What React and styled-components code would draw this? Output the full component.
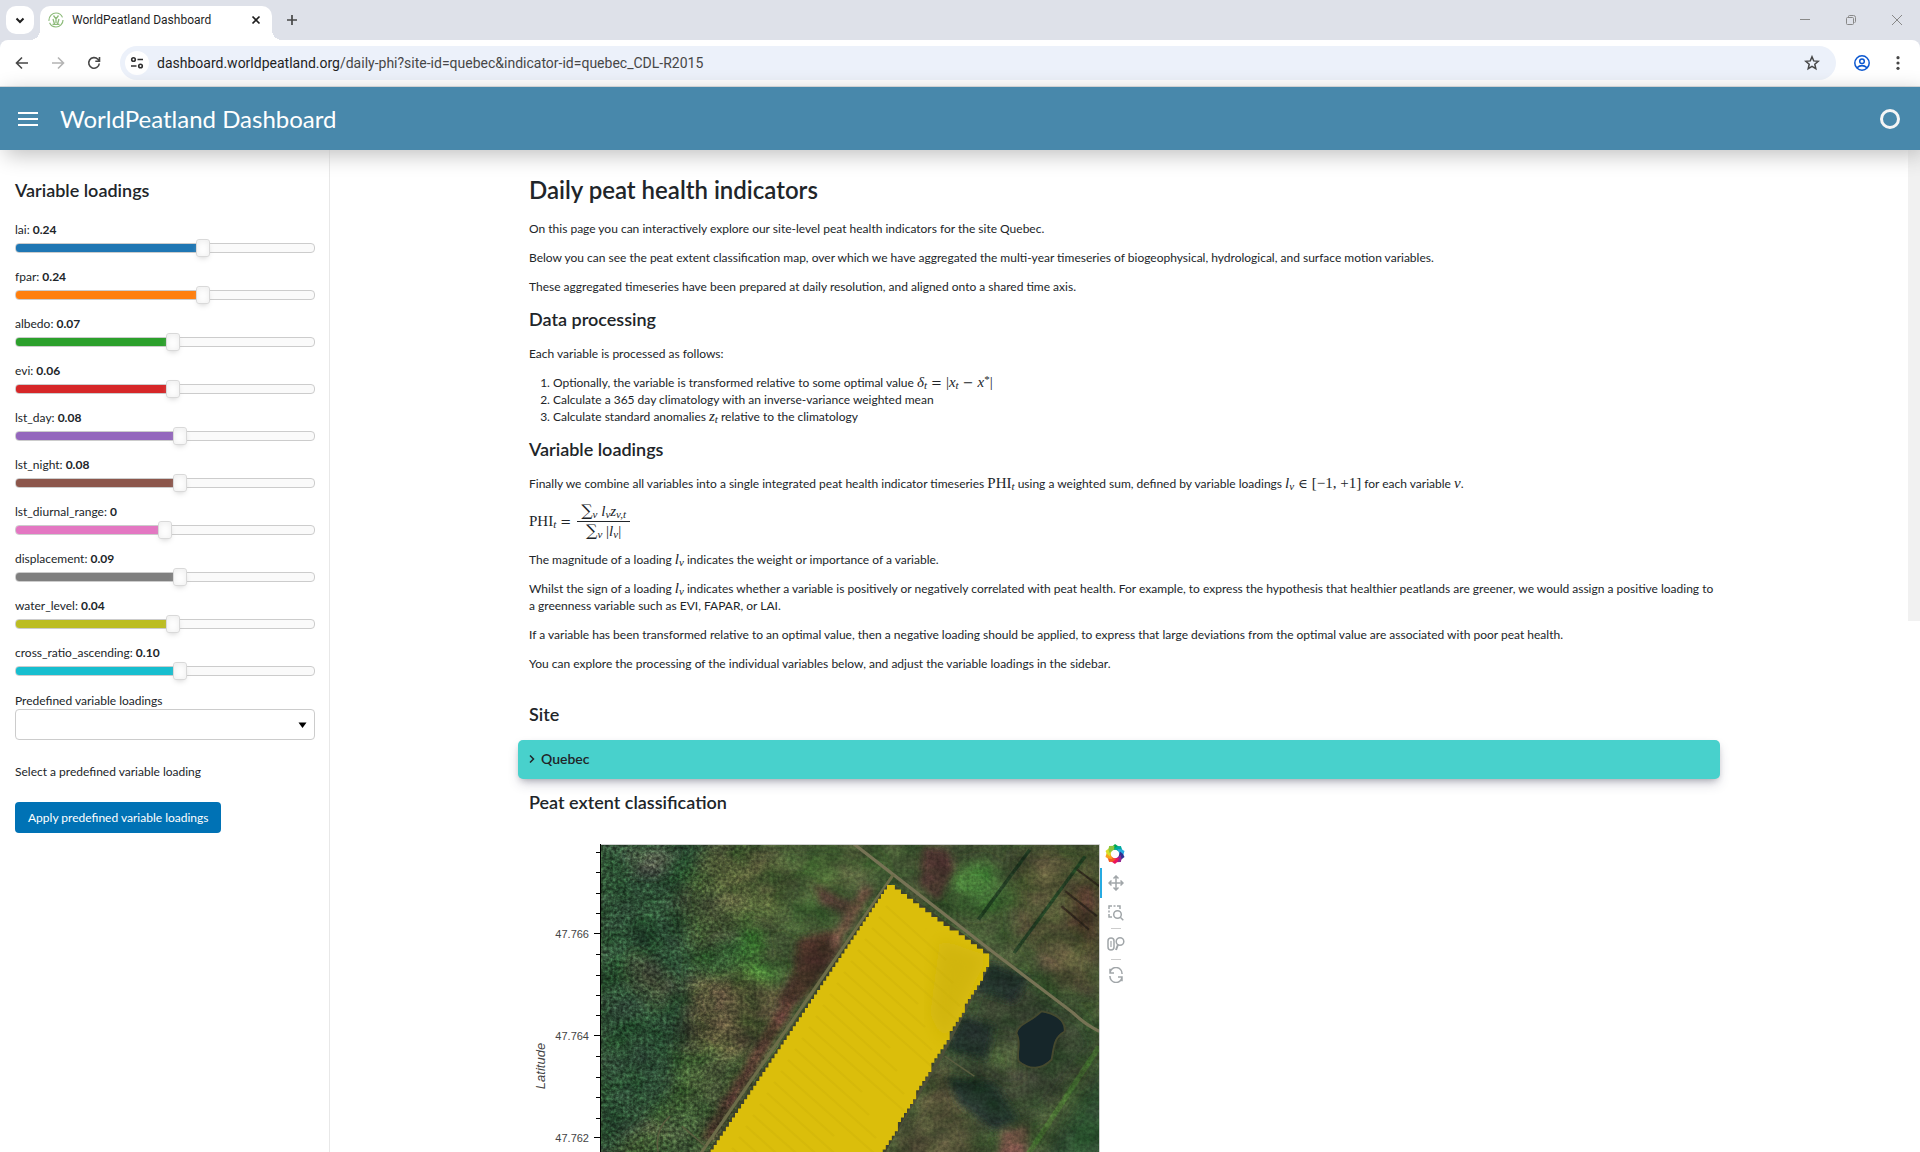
import React, { useState } from "react";
import styled, { createGlobalStyle } from "styled-components";

const GlobalStyle = createGlobalStyle`
  * { box-sizing: border-box; }
  html, body, #root { height: 100%; }
  body {
    margin: 0;
    overflow: hidden;
    background: #ffffff;
    color: #212529;
    font: 12px/17px Lato, "Liberation Sans", sans-serif;
  }
  button, select, input { font: inherit; color: inherit; }
`;

const Page = styled.div`
  display: flex;
  flex-direction: column;
  height: 100%;
`;

/* ---------- browser window ---------- */

const TabStrip = styled.div`
  display: flex;
  align-items: flex-end;
  height: 40px;
  flex: none;
  background: #dee1e9;
`;

const IconButton = styled.button`
  display: flex;
  align-items: center;
  justify-content: center;
  width: ${(p) => p.$w || 28}px;
  height: ${(p) => p.$h || 28}px;
  padding: 0;
  border: 0;
  border-radius: ${(p) => p.$radius || 0}px;
  background: ${(p) => p.$bg || "transparent"};
  flex: none;
`;

const TabSearch = styled.div`
  display: flex;
  padding: 0 6px;
  height: 34px;
`;

const Tab = styled.div`
  position: relative;
  display: flex;
  align-items: center;
  gap: 8px;
  width: 232px;
  height: 34px;
  padding: 0 8px;
  padding-bottom: 6px;
  border-radius: 10px 10px 0 0;
  background: #ffffff;
  color: #1f1f1f;
  font: 12px/16px Roboto, "Noto Sans", sans-serif;
  &::before, &::after {
    content: "";
    position: absolute;
    bottom: 0;
    width: 10px;
    height: 10px;
  }
  &::before {
    left: -10px;
    background: radial-gradient(circle at 0 0, transparent 10px, #ffffff 10px);
  }
  &::after {
    right: -10px;
    background: radial-gradient(circle at 100% 0, transparent 10px, #ffffff 10px);
  }
`;

const TabTitle = styled.span`
  flex: 1;
  white-space: nowrap;
`;

const NewTab = styled.div`
  display: flex;
  padding-left: 6px;
  height: 34px;
`;

const WindowButtons = styled.div`
  display: flex;
  margin-left: auto;
  height: 40px;
`;

const ToolbarBack = styled.div`
  flex: none;
  background: #dee1e9;
`;

const Toolbar = styled.div`
  display: flex;
  align-items: center;
  height: 47px;
  padding: 0 4px 1px 4px;
  border-bottom: 1px solid #d5d9dc;
  border-radius: 8px 8px 0 0;
  background: #ffffff;
`;

const AddressBar = styled.div`
  display: flex;
  align-items: center;
  flex: 1;
  height: 34px;
  margin: 0 8px;
  padding: 0 10px 0 5px;
  border-radius: 17px;
  background: #ecf1fa;
`;

const Address = styled.div`
  flex: 1;
  padding-left: 8px;
  color: #474747;
  font: 14px/20px Roboto, "Noto Sans", sans-serif;
  white-space: nowrap;
  b { font-weight: 400; color: #1f1f1f; }
`;

/* ---------- dashboard frame ---------- */

const Header = styled.header`
  position: relative;
  z-index: 2;
  display: flex;
  align-items: center;
  flex: none;
  height: 63px;
  padding: 0 20px 0 14px;
  background: #4888ab;
  box-shadow: 5px 5px 20px silver;
  color: #ffffff;
`;

const Brand = styled.a`
  margin-left: 18px;
  color: inherit;
  font-size: 24px;
  line-height: 34px;
  text-decoration: none;
`;

const Busy = styled.div`
  width: 20px;
  height: 20px;
  margin-left: auto;
  border: 3px solid #f5f5f5;
  border-radius: 50%;
`;

const Body = styled.div`
  display: flex;
  flex: 1;
  min-height: 0;
`;

const Sidebar = styled.aside`
  flex: none;
  width: 330px;
  padding: 28px 14px 0 15px;
  border-right: 1px solid #e8e8e8;
`;

const Main = styled.main`
  flex: 1;
  min-width: 0;
  overflow: hidden;
`;

const ScrollTrack = styled.div`
  flex: none;
  width: 12px;
`;

const ScrollThumb = styled.div`
  height: 47%;
  background: #f1f1f1;
`;

/* ---------- sidebar widgets ---------- */

const Heading = styled.h2`
  margin: 0;
  padding-bottom: 2px;
  font-size: 18px;
  line-height: 24px;
  font-weight: 600;
`;

const SliderList = styled.div`
  display: flex;
  flex-direction: column;
  gap: 11px;
  padding: 17px 0 12px;
`;

const SliderField = styled.div`
  label { display: block; line-height: 18px; }
  b { font-weight: 700; }
`;

const SliderBox = styled.div`
  display: grid;
  align-items: center;
  height: 18px;
  > * { grid-area: 1 / 1; }
`;

const Track = styled.div`
  height: 10px;
  border: 1px solid #cccccc;
  border-radius: 4px;
  background: #fafafa;
  overflow: hidden;
`;

const Fill = styled.div`
  height: 8px;
  background: ${(p) => p.$color};
`;

const Range = styled.input`
  appearance: none;
  width: calc(100% + 14px);
  height: 18px;
  margin: 0 -7px;
  background: transparent;
  &::-webkit-slider-thumb {
    appearance: none;
    width: 14px;
    height: 18px;
    border: 1px solid #d9d9d9;
    border-radius: 3px;
    background: #ffffff;
    box-shadow: inset 0 0 1px #ffffff, inset 0 1px 7px #ebebeb, 0 3px 6px -3px #bbbbbb;
  }
`;

const SelectBox = styled.div`
  display: grid;
  align-items: center;
  > * { grid-area: 1 / 1; }
  > svg { justify-self: end; margin-right: 8px; pointer-events: none; }
`;

const Select = styled.select`
  appearance: none;
  width: 100%;
  height: 31px;
  padding: 0 12px;
  border: 1px solid #cccccc;
  border-radius: 4px;
  background: #ffffff;
`;

const Hint = styled.p`
  margin: 23px 0 22px;
`;

const ApplyButton = styled.button`
  height: 31px;
  padding: 0 13px;
  border: 0;
  border-radius: 4px;
  background: #0072b5;
  color: #ffffff;
`;

/* ---------- main column ---------- */

const Column = styled.div`
  width: 100%;
  max-width: 1202px;
  margin: 0 auto;
  padding-top: 23px;
`;

const Prose = styled.div`
  display: flex;
  flex-direction: column;
  gap: 12px;
  padding: 0 0 0 11px;
  p { margin: 0; }
  ol { margin: 0; padding-left: 24px; }
`;

const Title = styled.h1`
  margin: 0;
  padding-bottom: 2px;
  font-size: 24px;
  line-height: 33px;
  font-weight: 600;
`;

const SiteBlock = styled.section`
  margin-top: 30px;
`;

const Card = styled.details`
  margin: 12px 0 11px;
  border-radius: 5px;
  background: #48d1cc;
  box-shadow: rgba(50, 50, 93, 0.25) 0 6px 12px -2px, rgba(0, 0, 0, 0.3) 0 3px 7px -3px;
  summary {
    display: flex;
    align-items: center;
    gap: 6px;
    height: 39px;
    padding: 0 11px 1px;
    font-size: 14px;
    line-height: 20px;
    font-weight: 600;
    list-style: none;
  }
`;

const Figure = styled.figure`
  display: flex;
  margin: 16px 0 0;
`;

const Tools = styled.div`
  display: flex;
  flex-direction: column;
  align-items: center;
  width: 31px;
`;

const BokehLink = styled.a`
  display: flex;
  padding-right: 2px;
  height: 24px;
`;

const ToolButton = styled.button`
  display: flex;
  align-items: center;
  justify-content: center;
  width: 31px;
  height: 30px;
  padding: 0 2px 0 0;
  border: 0;
  border-left: 2px solid ${(p) => (p.$active ? "#26aae1" : "transparent")};
  background: transparent;
`;

const Divider = styled.span`
  width: 10px;
  height: 1px;
  background: #cccccc;
`;

/* ---------- math ---------- */

const Formula = styled.span`
  font-family: "Liberation Serif", "DejaVu Serif", serif;
  font-size: 15px;
  line-height: 16px;
  white-space: nowrap;
  i { font-style: italic; }
  sub { font-size: 11px; line-height: 0; vertical-align: -2px; font-style: italic; }
  sup { font-size: 11px; line-height: 0; vertical-align: 4px; }
`;

const Rel = styled.span`
  padding: 0 4px;
  font-family: "DejaVu Serif", serif;
  font-size: 13px;
`;

const Equation = styled(Formula)`
  display: flex;
  align-items: center;
  height: 35px;
`;

const Fraction = styled.span`
  display: flex;
  flex-direction: column;
  margin-left: 2px;
  > span { text-align: center; line-height: 17px; padding: 0 4px; }
  > span:first-child { padding-bottom: 1px; }
  > span + span { padding-top: 1px; border-top: 1px solid #212529; }
`;

const Sum = styled.span`
  font-family: "DejaVu Serif", serif;
  font-size: 16px;
  line-height: 0;
`;

/* ---------- icons ---------- */

const Svg = ({ w = 20, h, box, children, ...rest }) => (
  <svg width={w} height={h || w} viewBox={box || `0 0 ${w} ${h || w}`} fill="none" aria-hidden="true" {...rest}>
    {children}
  </svg>
);

const Favicon = () => (
  <Svg w={16}>
    <circle cx="8" cy="8" r="7" stroke="#8dbb7a" strokeWidth="1.2" strokeDasharray="19 2 20 3" />
    <path d="M5.5 3.5 8 7l2.5-3.5M8 5v6M5 7l1.5 5M11 7l-1.5 5M4.5 12.3h7" stroke="#8dbb7a" strokeWidth="1.3" />
  </Svg>
);

const BOKEH = ["#00a651", "#00a99d", "#26aae1", "#2e3192", "#92278f", "#ed145b", "#f15a24", "#f9a01b", "#d7df23", "#8dc63f"];

const BokehLogo = () => (
  <Svg w={20} box="-10 -10 20 20">
    {BOKEH.map((c, i) => (
      <path key={c} d="M-4 -4 L-2.6 -7.6 L0 -10 L4.4 -7 L2 -4.2 Z" fill={c} transform={`rotate(${i * 36})`} />
    ))}
  </Svg>
);

/* ---------- aerial map ---------- */

const STEP_Y = 4.56;
const STEP_X = 3.04;

function fieldOutline() {
  const left = [];
  const right = [];
  const snap = (x) => Math.round(x / STEP_X) * STEP_X;
  for (let y = 41; y < 320; y += STEP_Y) {
    const k = (y - 41) / STEP_Y;
    const xl = 287 - k * STEP_X;
    const xr = y < 110 ? 296 + k * 6.12 : y < 123 ? 388 : 388 - (y - 121) * 0.565;
    left.push(`${xl} ${y}`, `${xl} ${y + STEP_Y}`);
    right.unshift(`${snap(xr)} ${y + STEP_Y}`, `${snap(xr)} ${y}`);
  }
  return `M${left.join(" L")} L${right.join(" L")} Z`;
}

const OUTLINE = fieldOutline();
const MAJOR = [[90, "47.766"], [192, "47.764"], [294, "47.762"]];
const MINOR = [8, 28, 49, 69, 110, 131, 151, 171, 212, 233, 253, 274];

const Texture = styled.rect`
  mix-blend-mode: overlay;
`;

const Aerial = () => (
  <g clipPath="url(#frame)">
    <rect width="499" height="320" fill="#3f5231" />
    <g transform="scale(0.3954 0.3333) translate(-203 -43)">
      <g filter="url(#soft)">
        <path d="M180 20H480L400 200 440 380 420 600 380 800 180 1030Z" fill="#2a4a33" />
        <path d="M440 380 560 300 640 460 500 560Z" fill="#355531" />
        <path d="M470 80 620 50 700 120 640 280 520 260Z" fill="#4f5a34" />
        <path d="M600 40 850 40 920 130 800 200 700 150Z" fill="#486034" />
        <path d="M430 460 600 420 680 500 560 690 440 640Z" fill="#524f35" />
        <path d="M400 640 540 680 470 800 400 760Z" fill="#405431" />
        <path d="M280 60 400 60 360 130 290 130Z" fill="#455040" />
        <path d="M290 360 400 470 350 540 270 440Z" fill="#3f4836" />
        <path d="M540 370 660 420 640 470 560 430ZM560 280 600 300 620 380 580 370Z" fill="#3f7a32" />
        <path d="M700 210 780 230 790 300 690 290Z" fill="#3f6230" />
        <path d="M1060 130 1180 90 1240 190 1150 260Z" fill="#437035" />
        <path d="M1260 60 1466 50 1466 300 1380 420 1250 300Z" fill="#4e5033" />
        <path d="M1390 200 1466 120 1466 400 1400 300Z" fill="#4d3b2c" />
        <path d="M1290 330 1440 350 1466 500 1340 440Z" fill="#524f34" />
        <path d="M1180 390 1420 560 1466 640 1330 850 1180 900 1080 700Z" fill="#34422f" />
        <path d="M1200 620 1260 640 1260 760 1180 720Z" fill="#455534" />
        <path d="M1060 700 1100 760 1180 1030 900 1030Z" fill="#505036" />
        <path d="M1490 680 1490 1030 1300 1030Z" fill="#2b4a2f" />
        <path d="M350 860 480 800 440 1030 340 1030Z" fill="#3b5533" />
      </g>
      <g filter="url(#mid)">
        <path d="M745 160 790 190 860 230 830 260 760 220ZM1020 50 1080 60 1100 120 1060 220 1010 160Z" fill="#4a352d" />
        <path d="M700 330 790 300 820 340 740 480 680 540 650 520 690 430Z" fill="#453028" />
        <path d="M870 170 895 180 800 360 780 340Z" fill="#66483c" />
        <path d="M650 540 700 520 490 930 455 930Z" fill="#52392e" />
        <path d="M1190 400 1290 440 1250 520 1150 480ZM1120 560 1200 590 1180 690 1080 660ZM1080 740 1200 760 1260 870 1200 900 1110 820Z" fill="#20302b" />
        <path d="M1220 910 1290 880 1270 1030 1200 1030Z" fill="#674b3f" />
      </g>
      <path d="M1290 60 1160 270M1430 80 1250 370" stroke="#223c24" strokeWidth="9" filter="url(#edge)" />
      <path d="M1466 650 1270 1002" stroke="#41652f" strokeWidth="14" filter="url(#edge)" />
      <path d="M1410 120 1466 170M1380 185 1460 260M1370 230 1440 300" stroke="#2f271c" strokeWidth="6" filter="url(#edge)" />
    </g>
    <Texture width="499" height="320" filter="url(#patches)" opacity="0.4" />
    <Texture width="499" height="320" filter="url(#trees)" opacity="0.18" />
    <Texture width="260" height="320" filter="url(#trees)" mask="url(#forest)" />
    <g transform="scale(0.3954 0.3333) translate(-203 -43)">
      <g filter="url(#edge)">
        <path d="M845 43 945 135 1200 370 1400 550Q1430 585 1466 605" stroke="#777355" strokeWidth="9" />
        <path d="M945 135 440 1002" stroke="#6d6d49" strokeWidth="8" />
        <path d="M1183 410 1066 680 902 1002" stroke="#4d4f37" strokeWidth="8" />
        <path d="M1075 680 1150 740M350 966Q340 900 380 860M410 890 470 950" stroke="#5b5d40" strokeWidth="4" />
        <path d="M1320 545C1350 550 1382 570 1378 605C1350 625 1352 650 1345 690C1320 720 1290 722 1262 695C1255 670 1270 640 1256 610C1262 580 1290 580 1320 545Z" fill="#14252a" stroke="#45482f" strokeWidth="5" />
      </g>
      <path d="M935 170 486 966H476L927 170ZM950 170 1190 370 1184 376 940 186ZM1186 400 926 966H918L1180 400Z" fill="#3d412d" />
    </g>
    <path d={OUTLINE} fill="#dbbe0b" />
    <g clipPath="url(#field)">
      <path d="M340 95 388 112 345 200 330 170Z" fill="#d1b50a" filter="url(#haze)" />
      <g filter="url(#edge)" stroke="#c9ae09" strokeWidth="2" opacity="0.3">
        {Array.from({ length: 26 }, (_, i) => (
          <path key={i} d={`M${286 - i * 7} ${62 + i * 11} l${60 + (i % 4) * 14} ${54 + (i % 4) * 12}`} />
        ))}
      </g>
    </g>
  </g>
);

const MapPlot = () => (
  <svg width="571" height="320" viewBox="-71 0 571 320" fill="none" role="img" aria-label="Peat extent map">
    <defs>
      <clipPath id="frame"><rect width="499" height="320" /></clipPath>
      <clipPath id="field"><path d={OUTLINE} /></clipPath>
      <linearGradient id="fade">
        <stop offset="0" stopColor="#ffffff" stopOpacity="0.35" />
        <stop offset="0.4" stopColor="#ffffff" stopOpacity="0.25" />
        <stop offset="0.8" stopColor="#ffffff" stopOpacity="0" />
      </linearGradient>
      <mask id="forest"><rect width="260" height="320" fill="url(#fade)" /></mask>
      <filter id="soft"><feGaussianBlur stdDeviation="20" /></filter>
      <filter id="mid"><feGaussianBlur stdDeviation="9" /></filter>
      <filter id="haze"><feGaussianBlur stdDeviation="8" /></filter>
      <filter id="edge"><feGaussianBlur stdDeviation="0.7" /></filter>
      <filter id="patches" x="0" y="0" width="100%" height="100%" colorInterpolationFilters="sRGB">
        <feTurbulence type="fractalNoise" baseFrequency="0.03 0.04" numOctaves="5" seed="8" />
        <feColorMatrix values="1.3 0 0 0 -0.12  0.8 0.5 0 0 -0.12  1.1 0 0.1 0 -0.1  0 0 0 0 1" />
      </filter>
      <filter id="trees" x="0" y="0" width="100%" height="100%" colorInterpolationFilters="sRGB">
        <feTurbulence type="fractalNoise" baseFrequency="0.3" numOctaves="3" seed="3" />
        <feColorMatrix values="0 1.6 0 0 -0.32  0 1.6 0 0 -0.3  0 1.6 0 0 -0.3  0 0 0 0 1" />
      </filter>
    </defs>
    <Aerial />
    <path d="M0 0.5H499.5V320" stroke="#cfcfcf" />
    <path d="M0.5 0V320" stroke="#000000" />
    {MINOR.map((y) => <path key={y} d={`M-4 ${y + 0.5}H0`} stroke="#000000" />)}
    {MAJOR.map(([y, label]) => (
      <g key={y}>
        <path d={`M-6 ${y - 0.5}H0`} stroke="#000000" />
        <text x="-11" y={y + 4} textAnchor="end" fill="#444444" fontSize="11" fontFamily="Liberation Sans, Arial, sans-serif">{label}</text>
      </g>
    ))}
    <text transform="translate(-55 222) rotate(-90)" textAnchor="middle" fill="#444444" fontSize="13" fontStyle="italic" fontFamily="Liberation Sans, Arial, sans-serif">Latitude</text>
  </svg>
);

/* ---------- page ---------- */

const LOADINGS = [
  ["lai", "0.24", "#1f77b4"],
  ["fpar", "0.24", "#ff7f0e"],
  ["albedo", "0.07", "#2ca02c"],
  ["evi", "0.06", "#d62728"],
  ["lst_day", "0.08", "#9467bd"],
  ["lst_night", "0.08", "#8c564b"],
  ["lst_diurnal_range", "0", "#e377c2"],
  ["displacement", "0.09", "#7f7f7f"],
  ["water_level", "0.04", "#bcbd22"],
  ["cross_ratio_ascending", "0.10", "#17becf"],
];

function Slider({ name, initial, color }) {
  const [shown, setShown] = useState(initial);
  const stepped = Math.round(Number(shown) * 20) / 20;
  return (
    <SliderField>
      <label htmlFor={name}>{name}: <b>{shown}</b></label>
      <SliderBox>
        <Track><Fill $color={color} style={{ width: `${(stepped + 1) * 50}%` }} /></Track>
        <Range id={name} type="range" min="-1" max="1" step="0.05" value={stepped} onChange={(e) => setShown(e.target.value)} />
      </SliderBox>
    </SliderField>
  );
}

const grey = { stroke: "#a1a6a9", strokeWidth: 1.5 };

export default function App() {
  return (
    <Page>
      <GlobalStyle />
      <TabStrip>
        <TabSearch>
          <IconButton $radius={10} $bg="#ffffff" aria-label="Search tabs">
            <Svg w={10}><path d="M1.5 3.5 5 7l3.5-3.5" stroke="#1f1f1f" strokeWidth="2" /></Svg>
          </IconButton>
        </TabSearch>
        <Tab>
          <Favicon />
          <TabTitle>WorldPeatland Dashboard</TabTitle>
          <IconButton $w={16} $h={16} aria-label="Close tab">
            <Svg w={10}><path d="M1.5 1.5l7 7M8.5 1.5l-7 7" stroke="#1f1f1f" strokeWidth="1.7" /></Svg>
          </IconButton>
        </Tab>
        <NewTab>
          <IconButton aria-label="New tab">
            <Svg w={12}><path d="M6 1v10M1 6h10" stroke="#474747" strokeWidth="1.7" /></Svg>
          </IconButton>
        </NewTab>
        <WindowButtons>
          <IconButton $w={46} $h={40} aria-label="Minimize">
            <Svg w={10}><path d="M0 4.5h10" stroke="#888888" /></Svg>
          </IconButton>
          <IconButton $w={46} $h={40} aria-label="Restore">
            <Svg w={10}><rect x="0.5" y="2.5" width="7" height="7" rx="1" stroke="#888888" /><path d="M2.5 2V1.5q0-1 1-1h4q2 0 2 2v4q0 1-1 1" stroke="#888888" /></Svg>
          </IconButton>
          <IconButton $w={46} $h={40} aria-label="Close window">
            <Svg w={10}><path d="M0 0l10 10M10 0L0 10" stroke="#888888" /></Svg>
          </IconButton>
        </WindowButtons>
      </TabStrip>
      <ToolbarBack>
        <Toolbar>
          <IconButton $w={36} aria-label="Back">
            <Svg w={14}><path d="M13 7H2M7 1.5L1.5 7 7 12.5" stroke="#474747" strokeWidth="1.6" /></Svg>
          </IconButton>
          <IconButton $w={36} aria-label="Forward">
            <Svg w={14}><path d="M1 7h11M7 1.5L12.5 7 7 12.5" stroke="#b4b4b4" strokeWidth="1.6" /></Svg>
          </IconButton>
          <IconButton $w={36} aria-label="Reload">
            <Svg w={14}><path d="M12.3 7.5a5.3 5.3 0 1 1-1.4-4.2L12.5 5M12.5 1v4.2H8.3" stroke="#474747" strokeWidth="1.6" /></Svg>
          </IconButton>
          <AddressBar>
            <IconButton $w={24} $h={24} $radius={12} $bg="#ffffff" aria-label="Site information">
              <Svg w={14}>
                <circle cx="3.5" cy="3.5" r="1.8" stroke="#303030" strokeWidth="1.6" />
                <circle cx="10.5" cy="10" r="1.8" stroke="#303030" strokeWidth="1.6" />
                <path d="M7.5 3.5H13M1 10h5.5" stroke="#303030" strokeWidth="1.6" />
              </Svg>
            </IconButton>
            <Address><b>dashboard.worldpeatland.org</b>/daily-phi?site-id=quebec&amp;indicator-id=quebec_CDL-R2015</Address>
            <IconButton aria-label="Bookmark">
              <Svg w={16}><path d="M8 1.8l1.7 4.1 4.5.4-3.4 2.9 1 4.4L8 11.3l-3.8 2.3 1-4.4-3.4-2.9 4.5-.4z" stroke="#474747" strokeWidth="1.5" /></Svg>
            </IconButton>
          </AddressBar>
          <IconButton $w={36} aria-label="Profile">
            <Svg w={18}>
              <circle cx="9" cy="9" r="7.2" stroke="#0b57d0" strokeWidth="1.5" />
              <circle cx="9" cy="7.3" r="2.3" stroke="#0b57d0" strokeWidth="1.5" />
              <path d="M3.8 13.8Q9 9.5 14.2 13.8" stroke="#0b57d0" strokeWidth="1.5" />
            </Svg>
          </IconButton>
          <IconButton $w={36} aria-label="Menu">
            <Svg w={14}><g fill="#474747"><circle cx="7" cy="1.7" r="1.6" /><circle cx="7" cy="7" r="1.6" /><circle cx="7" cy="12.3" r="1.6" /></g></Svg>
          </IconButton>
        </Toolbar>
      </ToolbarBack>

      <Header>
        <IconButton aria-label="Toggle sidebar">
          <Svg w={20} h={14}><path d="M0 1h20M0 7h20M0 13h20" stroke="#ffffff" strokeWidth="2" /></Svg>
        </IconButton>
        <Brand href="#">WorldPeatland Dashboard</Brand>
        <Busy />
      </Header>

      <Body>
        <Sidebar>
          <Heading>Variable loadings</Heading>
          <SliderList>
            {LOADINGS.map(([name, initial, color]) => (
              <Slider key={name} name={name} initial={initial} color={color} />
            ))}
          </SliderList>
          <label htmlFor="predefined">Predefined variable loadings</label>
          <SelectBox>
            <Select id="predefined"><option aria-label="none" /></Select>
            <Svg w={9} h={6}><path d="M0.5 0.5H8.5L4.5 6z" fill="#000000" /></Svg>
          </SelectBox>
          <Hint>Select a predefined variable loading</Hint>
          <ApplyButton>Apply predefined variable loadings</ApplyButton>
        </Sidebar>

        <Main>
          <Column>
            <Prose>
              <Title>Daily peat health indicators</Title>
              <p>On this page you can interactively explore our site-level peat health indicators for the site Quebec.</p>
              <p>Below you can see the peat extent classification map, over which we have aggregated the multi-year timeseries of biogeophysical, hydrological, and surface motion variables.</p>
              <p>These aggregated timeseries have been prepared at daily resolution, and aligned onto a shared time axis.</p>
              <Heading>Data processing</Heading>
              <p>Each variable is processed as follows:</p>
              <ol>
                <li>Optionally, the variable is transformed relative to some optimal value <Formula><i>δ</i><sub>t</sub><Rel>=</Rel>|<i>x</i><sub>t</sub><Rel>−</Rel><i>x</i><sup>*</sup>|</Formula></li>
                <li>Calculate a 365 day climatology with an inverse-variance weighted mean</li>
                <li>Calculate standard anomalies <Formula><i>z</i><sub>t</sub></Formula> relative to the climatology</li>
              </ol>
              <Heading>Variable loadings</Heading>
              <p>Finally we combine all variables into a single integrated peat health indicator timeseries <Formula>PHI<sub>t</sub></Formula> using a weighted sum, defined by variable loadings <Formula><i>l</i><sub>v</sub><Rel>∈</Rel>[−1, +1]</Formula> for each variable <Formula><i>v</i></Formula>.</p>
              <Equation>
                <span>PHI<sub>t</sub><Rel>=</Rel></span>
                <Fraction>
                  <span><Sum>∑</Sum><sub>v</sub> <i>l</i><sub>v</sub><i>z</i><sub>v,t</sub></span>
                  <span><Sum>∑</Sum><sub>v</sub> |<i>l</i><sub>v</sub>|</span>
                </Fraction>
              </Equation>
              <p>The magnitude of a loading <Formula><i>l</i><sub>v</sub></Formula> indicates the weight or importance of a variable.</p>
              <p>Whilst the sign of a loading <Formula><i>l</i><sub>v</sub></Formula> indicates whether a variable is positively or negatively correlated with peat health. For example, to express the hypothesis that healthier peatlands are greener, we would assign a positive loading to a greenness variable such as EVI, FAPAR, or LAI.</p>
              <p>If a variable has been transformed relative to an optimal value, then a negative loading should be applied, to express that large deviations from the optimal value are associated with poor peat health.</p>
              <p>You can explore the processing of the individual variables below, and adjust the variable loadings in the sidebar.</p>
            </Prose>
            <SiteBlock>
              <Prose><Heading>Site</Heading></Prose>
              <Card>
                <summary>
                  <Svg w={6} h={8}><path d="M1 0.5L4.5 4 1 7.5" stroke="#212529" strokeWidth="1.5" /></Svg>
                  Quebec
                </summary>
              </Card>
              <Prose>
                <Heading>Peat extent classification</Heading>
                <Figure>
                  <MapPlot />
                  <Tools>
                    <BokehLink href="#" aria-label="Bokeh"><BokehLogo /></BokehLink>
                    <ToolButton $active aria-label="Pan">
                      <Svg w={16}><path d="M8 1v14M1 8h14M5.5 3.5L8 1l2.5 2.5M5.5 12.5L8 15l2.5-2.5M3.5 5.5L1 8l2.5 2.5M12.5 5.5L15 8l-2.5 2.5" {...grey} /></Svg>
                    </ToolButton>
                    <ToolButton aria-label="Box zoom">
                      <Svg w={16}><path d="M1 4V1h3M5.5 1h2M9 1h3v3M1 5.5v2M1 9v3h3" {...grey} /><circle cx="9.5" cy="9.5" r="3.8" {...grey} /><path d="M12.3 12.3L15.3 15.3" {...grey} /></Svg>
                    </ToolButton>
                    <Divider />
                    <ToolButton aria-label="Wheel zoom">
                      <Svg w={18} h={16}><rect x="1" y="2" width="6" height="12" rx="3" {...grey} /><path d="M4 5v6" {...grey} strokeWidth="1.2" /><circle cx="13" cy="5.5" r="3.8" {...grey} /><path d="M11 8.5L9 14" {...grey} strokeWidth="2" /></Svg>
                    </ToolButton>
                    <Divider />
                    <ToolButton aria-label="Reset">
                      <Svg w={16}><path d="M2 6A6 6 0 0 1 14 7M14 10A6 6 0 0 1 2 9M2 1.8V6h4M14 14.2V10h-4" {...grey} /></Svg>
                    </ToolButton>
                  </Tools>
                </Figure>
              </Prose>
            </SiteBlock>
          </Column>
        </Main>
        <ScrollTrack><ScrollThumb /></ScrollTrack>
      </Body>
    </Page>
  );
}
